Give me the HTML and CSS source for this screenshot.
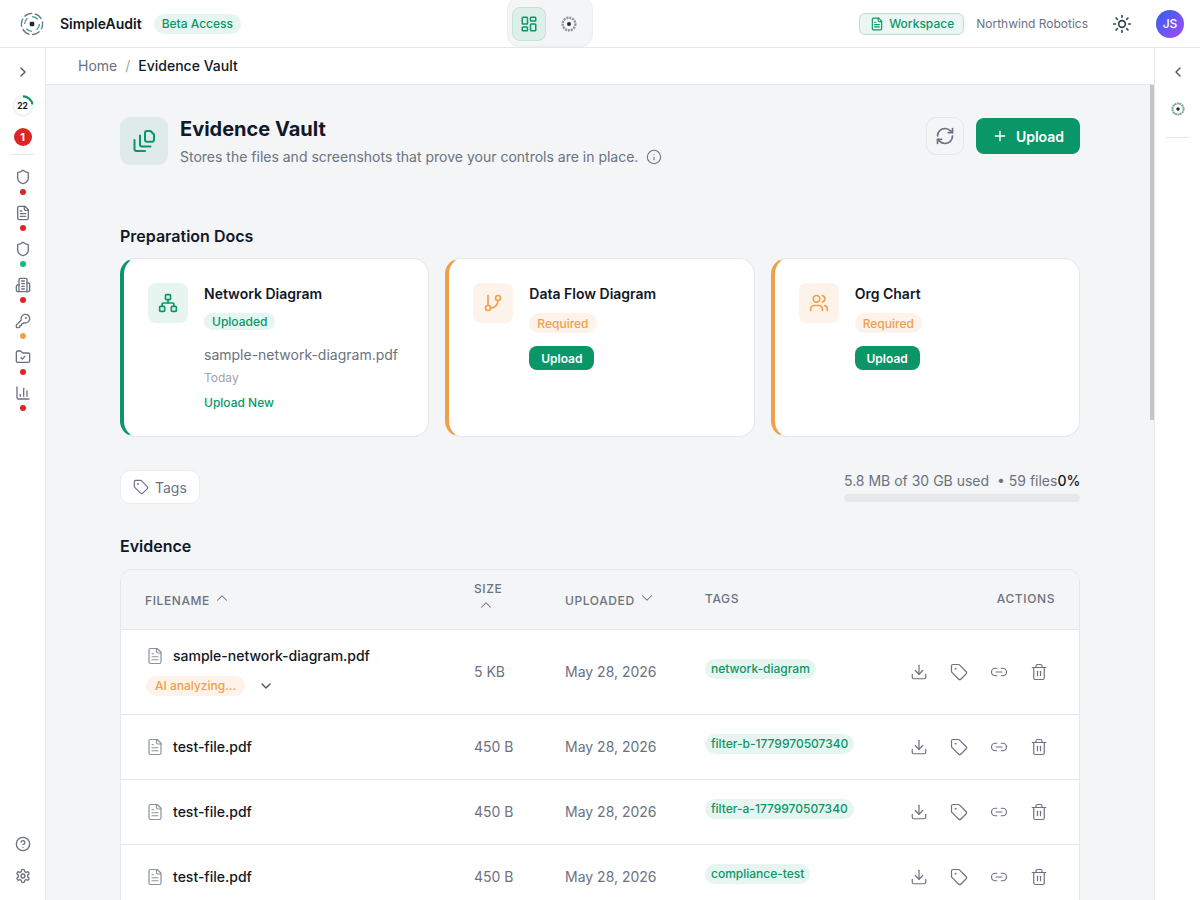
FILE: index.html
```html
<!DOCTYPE html>
<html lang="en">
<head>
<meta charset="utf-8">
<title>Evidence Vault</title>
<link rel="stylesheet" href="styles.css">
</head>
<body>
<svg class="defs" aria-hidden="true">
  <symbol id="i-right" viewBox="0 0 24 24"><path d="m9 18 6-6-6-6"/></symbol>
  <symbol id="i-left" viewBox="0 0 24 24"><path d="m15 18-6-6 6-6"/></symbol>
  <symbol id="i-up" viewBox="0 0 24 24"><path d="m18 15-6-6-6 6"/></symbol>
  <symbol id="i-down" viewBox="0 0 24 24"><path d="m6 9 6 6 6-6"/></symbol>
  <symbol id="i-shield" viewBox="0 0 24 24"><path d="M20 13c0 5-3.5 7.5-7.66 8.95a1 1 0 0 1-.67-.01C7.5 20.5 4 18 4 13V6a1 1 0 0 1 1-1c2 0 4.5-1.2 6.24-2.72a1.17 1.17 0 0 1 1.52 0C14.51 3.81 17 5 19 5a1 1 0 0 1 1 1z"/></symbol>
  <symbol id="i-file" viewBox="0 0 24 24"><path d="M15 2H6a2 2 0 0 0-2 2v16a2 2 0 0 0 2 2h12a2 2 0 0 0 2-2V7Z"/><path d="M14 2v4a2 2 0 0 0 2 2h4"/><path d="M10 9H8"/><path d="M16 13H8"/><path d="M16 17H8"/></symbol>
  <symbol id="i-building" viewBox="0 0 24 24"><path d="M6 22V4a2 2 0 0 1 2-2h8a2 2 0 0 1 2 2v18Z"/><path d="M6 12H4a2 2 0 0 0-2 2v6a2 2 0 0 0 2 2h2"/><path d="M18 9h2a2 2 0 0 1 2 2v9a2 2 0 0 1-2 2h-2"/><path d="M10 6h4"/><path d="M10 10h4"/><path d="M10 14h4"/><path d="M10 18h4"/></symbol>
  <symbol id="i-key" viewBox="0 0 24 24"><path d="M2.586 17.414A2 2 0 0 0 2 18.828V21a1 1 0 0 0 1 1h3a1 1 0 0 0 1-1v-1a1 1 0 0 1 1-1h1a1 1 0 0 0 1-1v-1a1 1 0 0 1 1-1h.172a2 2 0 0 0 1.414-.586l.814-.814a6.5 6.5 0 1 0-4-4z"/><circle cx="16.5" cy="7.5" r=".5"/></symbol>
  <symbol id="i-folder" viewBox="0 0 24 24"><path d="M20 20a2 2 0 0 0 2-2V8a2 2 0 0 0-2-2h-7.9a2 2 0 0 1-1.69-.9L9.6 3.9A2 2 0 0 0 7.93 3H4a2 2 0 0 0-2 2v13a2 2 0 0 0 2 2Z"/><path d="m9 13 2 2 4-4"/></symbol>
  <symbol id="i-chart" viewBox="0 0 24 24"><path d="M3 3v16a2 2 0 0 0 2 2h16"/><path d="M18 17V9"/><path d="M13 17V5"/><path d="M8 17v-3"/></symbol>
  <symbol id="i-help" viewBox="0 0 24 24"><circle cx="12" cy="12" r="10"/><path d="M9.09 9a3 3 0 0 1 5.83 1c0 2-3 3-3 3"/><path d="M12 17h.01"/></symbol>
  <symbol id="i-gear" viewBox="0 0 24 24"><path d="M12.22 2h-.44a2 2 0 0 0-2 2v.18a2 2 0 0 1-1 1.73l-.43.25a2 2 0 0 1-2 0l-.15-.08a2 2 0 0 0-2.73.73l-.22.38a2 2 0 0 0 .73 2.73l.15.1a2 2 0 0 1 1 1.72v.51a2 2 0 0 1-1 1.74l-.15.09a2 2 0 0 0-.73 2.73l.22.38a2 2 0 0 0 2.73.73l.15-.08a2 2 0 0 1 2 0l.43.25a2 2 0 0 1 1 1.73V20a2 2 0 0 0 2 2h.44a2 2 0 0 0 2-2v-.18a2 2 0 0 1 1-1.73l.43-.25a2 2 0 0 1 2 0l.15.08a2 2 0 0 0 2.73-.73l.22-.39a2 2 0 0 0-.73-2.73l-.15-.08a2 2 0 0 1-1-1.74v-.5a2 2 0 0 1 1-1.74l.15-.09a2 2 0 0 0 .73-2.73l-.22-.38a2 2 0 0 0-2.73-.73l-.15.08a2 2 0 0 1-2 0l-.43-.25a2 2 0 0 1-1-1.73V4a2 2 0 0 0-2-2z"/><circle cx="12" cy="12" r="3"/></symbol>
  <symbol id="i-dash" viewBox="0 0 24 24"><rect x="3" y="3" width="7" height="9" rx="1"/><rect x="14" y="3" width="7" height="5" rx="1"/><rect x="14" y="12" width="7" height="9" rx="1"/><rect x="3" y="16" width="7" height="5" rx="1"/></symbol>
  <symbol id="i-sun" viewBox="0 0 24 24"><circle cx="12" cy="12" r="4"/><path d="M12 2v2"/><path d="M12 20v2"/><path d="m4.93 4.93 1.41 1.41"/><path d="m17.66 17.66 1.41 1.41"/><path d="M2 12h2"/><path d="M20 12h2"/><path d="m6.34 17.66-1.41 1.41"/><path d="m19.07 4.93-1.41 1.41"/></symbol>
  <symbol id="i-files" viewBox="0 0 24 24"><path d="M13 10.7V4a2 2 0 0 1 2-2h3.5L22 5.5v5.2a2 2 0 0 1-2 2h-5a2 2 0 0 1-2-2Z"/><path d="M8 6.5v9a2 2 0 0 0 2 2h8.5"/><path d="M2.5 11v9a2 2 0 0 0 2 2H13"/></symbol>
  <symbol id="i-refresh" viewBox="0 0 24 24"><path d="M3 12a9 9 0 0 1 9-9 9.75 9.75 0 0 1 6.74 2.74L21 8"/><path d="M21 3v5h-5"/><path d="M21 12a9 9 0 0 1-9 9 9.75 9.75 0 0 1-6.74-2.74L3 16"/><path d="M8 16H3v5"/></symbol>
  <symbol id="i-plus" viewBox="0 0 24 24"><path d="M5 12h14"/><path d="M12 5v14"/></symbol>
  <symbol id="i-network" viewBox="0 0 24 24"><rect x="16" y="16" width="6" height="6" rx="1"/><rect x="2" y="16" width="6" height="6" rx="1"/><rect x="9" y="2" width="6" height="6" rx="1"/><path d="M5 16v-3a1 1 0 0 1 1-1h12a1 1 0 0 1 1 1v3"/><path d="M12 12V8"/></symbol>
  <symbol id="i-branch" viewBox="0 0 24 24"><path d="M6 3v12"/><circle cx="18" cy="6" r="3"/><circle cx="6" cy="18" r="3"/><path d="M18 9a9 9 0 0 1-9 9"/></symbol>
  <symbol id="i-users" viewBox="0 0 24 24"><path d="M16 21v-2a4 4 0 0 0-4-4H6a4 4 0 0 0-4 4v2"/><circle cx="9" cy="7" r="4"/><path d="M22 21v-2a4 4 0 0 0-3-3.87"/><path d="M16 3.13a4 4 0 0 1 0 7.75"/></symbol>
  <symbol id="i-tag" viewBox="0 0 24 24"><path d="M12.586 2.586A2 2 0 0 0 11.172 2H4a2 2 0 0 0-2 2v7.172a2 2 0 0 0 .586 1.414l8.704 8.704a2.426 2.426 0 0 0 3.42 0l6.58-6.58a2.426 2.426 0 0 0 0-3.42z"/><circle cx="7.5" cy="7.5" r=".5"/></symbol>
  <symbol id="i-info" viewBox="0 0 24 24"><circle cx="12" cy="12" r="10"/><path d="M12 16v-4"/><path d="M12 8h.01"/></symbol>
  <symbol id="i-download" viewBox="0 0 24 24"><path d="M21 15v4a2 2 0 0 1-2 2H5a2 2 0 0 1-2-2v-4"/><path d="m7 10 5 5 5-5"/><path d="M12 15V3"/></symbol>
  <symbol id="i-link" viewBox="0 0 24 24"><path d="M9 17H7A5 5 0 0 1 7 7h2"/><path d="M15 7h2a5 5 0 1 1 0 10h-2"/><path d="M8 12h8"/></symbol>
  <symbol id="i-trash" viewBox="0 0 24 24"><path d="M3 6h18"/><path d="M19 6v14c0 1-1 2-2 2H7c-1 0-2-1-2-2V6"/><path d="M8 6V4c0-1 1-2 2-2h4c1 0 2 1 2 2v2"/><path d="M10 11v6"/><path d="M14 11v6"/></symbol>
  <symbol id="i-logo" viewBox="0 0 24 24"><circle class="logo-outer" cx="12" cy="12" r="10.6"/><circle class="logo-inner" cx="12" cy="12" r="7.4"/><rect class="logo-core" x="9.7" y="9.7" width="4.6" height="4.6" rx="1.2"/></symbol>
  <symbol id="i-logo-muted" viewBox="0 0 24 24"><circle class="logo-thick" cx="12" cy="12" r="9.5"/><circle class="logo-core" cx="12" cy="12" r="3"/></symbol>
  <symbol id="i-logo-mix" viewBox="0 0 24 24"><circle class="logo-mix-a" cx="12" cy="12" r="9.5"/><circle class="logo-mix-b" cx="12" cy="12" r="9.5"/><circle class="logo-core" cx="12" cy="12" r="3"/></symbol>
</svg>

<header class="topbar">
  <div class="brand">
    <svg class="brand-logo"><use href="#i-logo"/></svg>
    <span class="brand-name">SimpleAudit</span>
    <span class="pill pill-green">Beta Access</span>
  </div>
  <nav class="switcher">
    <button class="switch-btn switch-active"><svg class="ic ic-18"><use href="#i-dash"/></svg></button>
    <button class="switch-btn"><svg class="ic-16"><use href="#i-logo-muted"/></svg></button>
  </nav>
  <div class="top-right">
    <span class="workspace"><svg class="ic ic-14"><use href="#i-file"/></svg>Workspace</span>
    <span class="org">Northwind Robotics</span>
    <svg class="ic ic-20 sun"><use href="#i-sun"/></svg>
    <span class="avatar">JS</span>
  </div>
</header>

<div class="shell">
  <aside class="rail">
    <svg class="ic ic-16 rail-chevron"><use href="#i-right"/></svg>
    <div class="ring">
      <svg class="ring-svg" viewBox="0 0 24 24"><circle class="ring-track" cx="12" cy="12" r="10.5"/><circle class="ring-value" cx="12" cy="12" r="10.5"/></svg>
      <span class="ring-num">22</span>
    </div>
    <span class="count-badge">1</span>
    <div class="rail-rule"></div>
    <div class="rail-items">
      <div class="rail-item"><svg class="ic ic-16"><use href="#i-shield"/></svg><i class="dot dot-red"></i></div>
      <div class="rail-item"><svg class="ic ic-16"><use href="#i-file"/></svg><i class="dot dot-red"></i></div>
      <div class="rail-item"><svg class="ic ic-16"><use href="#i-shield"/></svg><i class="dot dot-green"></i></div>
      <div class="rail-item"><svg class="ic ic-16"><use href="#i-building"/></svg><i class="dot dot-red"></i></div>
      <div class="rail-item"><svg class="ic ic-16"><use href="#i-key"/></svg><i class="dot dot-orange"></i></div>
      <div class="rail-item"><svg class="ic ic-16"><use href="#i-folder"/></svg><i class="dot dot-red"></i></div>
      <div class="rail-item"><svg class="ic ic-16"><use href="#i-chart"/></svg><i class="dot dot-red"></i></div>
    </div>
    <div class="rail-bottom">
      <svg class="ic ic-16"><use href="#i-help"/></svg>
      <svg class="ic ic-16"><use href="#i-gear"/></svg>
    </div>
  </aside>

  <div class="main">
    <div class="crumbs"><span class="crumb-home">Home</span><span class="crumb-sep">/</span><span class="crumb-cur">Evidence Vault</span></div>
    <main class="scroll">
      <div class="content">
        <section class="page-head">
          <div class="head-icon"><svg class="ic ic-24 green"><use href="#i-files"/></svg></div>
          <div class="head-text">
            <h1>Evidence Vault</h1>
            <p>Stores the files and screenshots that prove your controls are in place.<svg class="ic ic-16 info"><use href="#i-info"/></svg></p>
          </div>
          <div class="head-actions">
            <button class="btn-refresh"><svg class="ic ic-20"><use href="#i-refresh"/></svg></button>
            <button class="btn-upload"><svg class="ic ic-16"><use href="#i-plus"/></svg>Upload</button>
          </div>
        </section>

        <h2 class="section-title prep-title">Preparation Docs</h2>
        <section class="cards">
          <article class="card card-green">
            <div class="card-icon icon-green"><svg class="ic ic-20"><use href="#i-network"/></svg></div>
            <div class="card-body">
              <h3>Network Diagram</h3>
              <span class="pill pill-green">Uploaded</span>
              <div class="card-file">sample-network-diagram.pdf</div>
              <div class="card-date">Today</div>
              <div class="card-link">Upload New</div>
            </div>
          </article>
          <article class="card card-orange">
            <div class="card-icon icon-orange"><svg class="ic ic-20"><use href="#i-branch"/></svg></div>
            <div class="card-body">
              <h3>Data Flow Diagram</h3>
              <span class="pill pill-orange">Required</span>
              <button class="btn-small">Upload</button>
            </div>
          </article>
          <article class="card card-orange">
            <div class="card-icon icon-orange"><svg class="ic ic-20"><use href="#i-users"/></svg></div>
            <div class="card-body">
              <h3>Org Chart</h3>
              <span class="pill pill-orange">Required</span>
              <button class="btn-small">Upload</button>
            </div>
          </article>
        </section>

        <section class="toolbar">
          <button class="btn-tags"><svg class="ic ic-16"><use href="#i-tag"/></svg>Tags</button>
          <div class="storage">
            <div class="storage-text"><span>5.8 MB of 30 GB used&nbsp; • 59 files</span><strong>0%</strong></div>
            <div class="storage-bar"></div>
          </div>
        </section>

        <h2 class="section-title">Evidence</h2>
        <section class="table">
          <div class="row row-head">
            <div class="th th-low">FILENAME<svg class="ic sort"><use href="#i-up"/></svg></div>
            <div class="th th-stack">SIZE<svg class="ic sort-stack"><use href="#i-up"/></svg></div>
            <div class="th th-low">UPLOADED<svg class="ic sort"><use href="#i-down"/></svg></div>
            <div class="th">TAGS</div>
            <div class="th th-right">ACTIONS</div>
          </div>
          <div class="row row-tall">
            <div class="name-stack">
              <div class="name"><svg class="ic ic-18 file-ic"><use href="#i-file"/></svg>sample-network-diagram.pdf</div>
              <div class="status"><span class="pill pill-orange">AI analyzing...</span><svg class="ic ic-16 dark"><use href="#i-down"/></svg></div>
            </div>
            <div class="cell">5 KB</div>
            <div class="cell">May 28, 2026</div>
            <div class="tags"><span class="pill pill-green">network-diagram</span></div>
            <div class="actions"><svg class="ic ic-18"><use href="#i-download"/></svg><svg class="ic ic-18"><use href="#i-tag"/></svg><svg class="ic ic-18"><use href="#i-link"/></svg><svg class="ic ic-18"><use href="#i-trash"/></svg></div>
          </div>
          <div class="row">
            <div class="name"><svg class="ic ic-18 file-ic"><use href="#i-file"/></svg>test-file.pdf</div>
            <div class="cell">450 B</div>
            <div class="cell">May 28, 2026</div>
            <div class="tags"><span class="pill pill-green">filter-b-1779970507340</span></div>
            <div class="actions"><svg class="ic ic-18"><use href="#i-download"/></svg><svg class="ic ic-18"><use href="#i-tag"/></svg><svg class="ic ic-18"><use href="#i-link"/></svg><svg class="ic ic-18"><use href="#i-trash"/></svg></div>
          </div>
          <div class="row">
            <div class="name"><svg class="ic ic-18 file-ic"><use href="#i-file"/></svg>test-file.pdf</div>
            <div class="cell">450 B</div>
            <div class="cell">May 28, 2026</div>
            <div class="tags"><span class="pill pill-green">filter-a-1779970507340</span></div>
            <div class="actions"><svg class="ic ic-18"><use href="#i-download"/></svg><svg class="ic ic-18"><use href="#i-tag"/></svg><svg class="ic ic-18"><use href="#i-link"/></svg><svg class="ic ic-18"><use href="#i-trash"/></svg></div>
          </div>
          <div class="row">
            <div class="name"><svg class="ic ic-18 file-ic"><use href="#i-file"/></svg>test-file.pdf</div>
            <div class="cell">450 B</div>
            <div class="cell">May 28, 2026</div>
            <div class="tags"><span class="pill pill-green">compliance-test</span></div>
            <div class="actions"><svg class="ic ic-18"><use href="#i-download"/></svg><svg class="ic ic-18"><use href="#i-tag"/></svg><svg class="ic ic-18"><use href="#i-link"/></svg><svg class="ic ic-18"><use href="#i-trash"/></svg></div>
          </div>
        </section>
      </div>
      <div class="scrollbar"><div class="scrollbar-thumb"></div></div>
    </main>
  </div>

  <aside class="side-panel">
    <svg class="ic ic-16 panel-chevron"><use href="#i-left"/></svg>
    <svg class="panel-logo"><use href="#i-logo-mix"/></svg>
    <div class="panel-rule"></div>
  </aside>
</div>
</body>
</html>
```

FILE: styles.css
```css
* { box-sizing: border-box; }
html, body { height: 100%; }
body {
  margin: 0;
  height: 900px;
  overflow: hidden;
  display: flex;
  flex-direction: column;
  background: #fff;
  color: #111827;
  font-family: Inter, "Liberation Sans", sans-serif;
  font-size: 14px;
}
button { font-family: inherit; cursor: pointer; }
h1, h2, h3, p { margin: 0; }
.defs { position: absolute; width: 0; height: 0; }

.ic { fill: none; stroke: #6b7280; stroke-width: 2; stroke-linecap: round; stroke-linejoin: round; flex: none; display: block; }
.ic-14 { width: 14px; height: 14px; }
.ic-16 { width: 16px; height: 16px; flex: none; display: block; }
.ic-18 { width: 18px; height: 18px; }
.ic-20 { width: 20px; height: 20px; }
.ic-24 { width: 24px; height: 24px; }
.green { stroke: #0b9668; }
.dark { stroke: #4b5563; }

.logo-outer { fill: none; stroke: #6b7280; stroke-width: 1.3; stroke-dasharray: 8.5 2.6; stroke-dashoffset: 3; }
.logo-inner { fill: none; stroke: #34a57f; stroke-width: 1.3; stroke-dasharray: 6.5 5.1; }
.logo-core { fill: #1f2937; stroke: none; }
.logo-thick { fill: none; stroke: #8b939c; stroke-width: 3.6; stroke-dasharray: 3 1.4; }
.logo-mix-a { fill: none; stroke: #8b9a99; stroke-width: 3.6; stroke-dasharray: 3 1.2; }
.logo-mix-b { fill: none; stroke: #63c0a3; stroke-width: 1.6; stroke-dasharray: 5 3.4; }

.pill {
  display: inline-flex;
  align-items: center;
  height: 20px;
  padding: 0 8px;
  border-radius: 10px;
  font-size: 12px;
  font-weight: 500;
  white-space: nowrap;
}
.pill-green { background: #e7f5f0; color: #0b9668; }
.pill-orange { background: #fdf3ea; color: #f0a04b; }

/* top bar */
.topbar {
  height: 48px;
  flex: none;
  display: flex;
  align-items: center;
  border-bottom: 1px solid #e5e7eb;
  padding-right: 16px;
}
.brand { width: 507px; flex: none; display: flex; align-items: center; padding-left: 20px; }
.brand-logo { width: 24px; height: 24px; }
.brand-name { margin-left: 16px; font-size: 14px; font-weight: 600; color: #111827; }
.brand .pill { margin-left: 12px; }
.switcher {
  align-self: flex-start;
  width: 86px;
  height: 50px;
  margin-top: -3px;
  display: flex;
  align-items: center;
  gap: 6px;
  padding: 4px 4px 0;
  background: #f3f5f6;
  border: 1px solid #eceeef;
  border-radius: 12px;
}
.switch-btn {
  width: 34px;
  height: 34px;
  padding: 0;
  display: flex;
  align-items: center;
  justify-content: center;
  background: none;
  border: 1px solid transparent;
  border-radius: 8px;
}
.switch-active { background: #dcefe9; border-color: #c4e2d8; }
.switch-active .ic { stroke: #0b9668; stroke-width: 2; }
.top-right { margin-left: auto; display: flex; align-items: center; }
.workspace {
  display: flex;
  align-items: center;
  gap: 5px;
  width: 105px;
  height: 22px;
  padding-left: 10px;
  background: #ecf7f3;
  border: 1px solid #b8e0d2;
  border-radius: 6px;
  color: #0b9668;
  font-size: 12px;
  font-weight: 500;
}
.workspace .ic { stroke: #0b9668; }
.org { margin-left: 12px; font-size: 12px; color: #6b7280; }
.sun { margin-left: 24px; stroke: #374151; }
.avatar {
  margin-left: 24px;
  width: 28px;
  height: 28px;
  border-radius: 50%;
  display: flex;
  align-items: center;
  justify-content: center;
  background: linear-gradient(135deg, #2f5ff0, #a44df2);
  color: #fff;
  font-size: 12px;
  font-weight: 500;
}

.shell { flex: 1; min-height: 0; display: flex; }

/* left rail */
.rail {
  width: 46px;
  flex: none;
  display: flex;
  flex-direction: column;
  align-items: center;
  border-right: 1px solid #e5e7eb;
  background: #fff;
  padding: 16px 0 16px;
}
.rail-chevron { stroke: #4b5563; }
.ring { position: relative; width: 22px; height: 22px; margin-top: 15px; }
.ring-svg { width: 22px; height: 22px; display: block; transform: rotate(-90deg); }
.ring-track { fill: none; stroke: #f1f2f4; stroke-width: 2.2; }
.ring-value { fill: none; stroke: #0b9668; stroke-width: 2.2; stroke-dasharray: 14.5 66; }
.ring-num { position: absolute; inset: 0; display: flex; align-items: center; justify-content: center; font-size: 8.5px; font-weight: 700; color: #111827; }
.count-badge {
  margin-top: 11px;
  width: 18px;
  height: 18px;
  border-radius: 50%;
  display: flex;
  align-items: center;
  justify-content: center;
  background: #dc2626;
  color: #fff;
  font-size: 11px;
  font-weight: 700;
}
.rail-rule { width: 23px; height: 1px; background: #e5e7eb; margin-top: 8px; }
.rail-items { display: flex; flex-direction: column; gap: 6px; margin-top: 14px; }
.rail-item { height: 30px; display: flex; flex-direction: column; align-items: center; }
.dot { width: 6px; height: 6px; border-radius: 50%; margin-top: 4px; display: block; flex: none; }
.dot-red { background: #dc2626; }
.dot-green { background: #10b981; }
.dot-orange { background: #f0a04b; }
.rail-bottom { margin-top: auto; display: flex; flex-direction: column; gap: 16px; }

/* main */
.main { flex: 1; min-width: 0; display: flex; flex-direction: column; }
.crumbs {
  height: 37px;
  flex: none;
  display: flex;
  align-items: center;
  padding: 0 0 2px 32px;
  border-bottom: 1px solid #e5e7eb;
  font-size: 14px;
}
.crumb-home { color: #6b7280; }
.crumb-sep { color: #9ca3af; margin: 0 8px; }
.crumb-cur { color: #111827; font-weight: 500; }
.scroll { flex: 1; min-height: 0; display: flex; overflow: hidden; background: #f3f5f7; }
.content { flex: 1; min-width: 0; overflow: hidden; padding: 32px 70px 0 74px; }
.scrollbar { width: 4px; flex: none; }
.scrollbar-thumb { height: 335px; background: #c4c5c6; }

.page-head { display: flex; align-items: flex-start; }
.head-icon {
  width: 48px;
  height: 48px;
  border-radius: 10px;
  background: #dfebe8;
  display: flex;
  align-items: center;
  justify-content: center;
}
.head-text { margin-left: 12px; }
.head-text h1 { font-size: 20px; line-height: 24px; font-weight: 700; color: #111827; }
.head-text p { margin-top: 5px; display: flex; align-items: center; font-size: 14px; line-height: 22px; color: #6b7280; }
.info { margin-left: 8px; stroke-width: 1.6; }
.head-actions { margin-left: auto; display: flex; align-items: center; gap: 12px; }
.btn-refresh {
  width: 38px;
  height: 38px;
  padding: 0;
  display: flex;
  align-items: center;
  justify-content: center;
  background: #f3f5f7;
  border: 1px solid #e5e7eb;
  border-radius: 10px;
}
.btn-upload {
  width: 104px;
  height: 36px;
  padding: 0;
  display: flex;
  align-items: center;
  justify-content: center;
  gap: 8px;
  background: #0b9668;
  border: none;
  border-radius: 8px;
  color: #fff;
  font-size: 14px;
  font-weight: 600;
}
.btn-upload .ic { stroke: #fff; }

.section-title { font-size: 16px; line-height: 24px; font-weight: 600; color: #111827; }
.prep-title { margin-top: 56px; }

.cards { display: grid; grid-template-columns: repeat(3, 1fr); gap: 16px; margin-top: 10px; }
.card {
  height: 179px;
  display: flex;
  gap: 16px;
  padding: 24px;
  background: #fff;
  border: 1px solid #e5e7eb;
  border-left-width: 4px;
  border-radius: 16px;
}
.card-green { border-left-color: #0b9668; }
.card-orange { border-left-color: #f0a04b; }
.card-icon {
  width: 40px;
  height: 40px;
  flex: none;
  border-radius: 8px;
  display: flex;
  align-items: center;
  justify-content: center;
}
.icon-green { background: #e7f5f0; }
.icon-green .ic { stroke: #0b9668; }
.icon-orange { background: #fdf3ea; }
.icon-orange .ic { stroke: #f0a04b; }
.card-body { display: flex; flex-direction: column; align-items: flex-start; min-width: 0; }
.card-body h3 { font-size: 14px; line-height: 22px; font-weight: 600; color: #111827; }
.card-body .pill { margin-top: 8px; }
.card-file { margin-top: 14px; font-size: 14px; line-height: 22px; color: #6b7280; }
.card-date { margin-top: 3px; font-size: 12px; line-height: 18px; color: #9ca3af; }
.card-link { margin-top: 7px; font-size: 12px; line-height: 18px; font-weight: 500; color: #0b9668; }
.btn-small {
  margin-top: 13px;
  width: 65px;
  height: 24px;
  padding: 0;
  background: #0b9668;
  border: none;
  border-radius: 8px;
  color: #fff;
  font-size: 12px;
  font-weight: 600;
}

.toolbar { display: flex; justify-content: space-between; margin-top: 33px; }
.btn-tags {
  width: 80px;
  height: 34px;
  padding: 0 0 0 12px;
  display: flex;
  align-items: center;
  gap: 6px;
  background: #fff;
  border: 1px solid #e9ebee;
  border-radius: 10px;
  color: #6b7280;
  font-size: 14px;
}
.btn-tags .ic { stroke-width: 1.7; }
.storage { width: 236px; padding-top: 2px; }
.storage-text { display: flex; justify-content: space-between; white-space: nowrap; font-size: 14px; line-height: 18px; color: #6b7280; }
.storage-text strong { font-weight: 500; color: #111827; }
.storage-bar { height: 8px; margin-top: 4px; border-radius: 4px; background: #e5e7eb; }

.toolbar + .section-title { margin-top: 30px; }

.table { margin-top: 11px; background: #fff; border: 1px solid #e5e7eb; border-radius: 12px 12px 0 0; }
.row {
  display: grid;
  grid-template-columns: 329px 91px 140px 198px 1fr;
  align-items: center;
  height: 65px;
  padding: 0 24px;
  border-top: 1px solid #e5e7eb;
}
.row-head {
  height: 59px;
  border-top: none;
  background: #f3f5f7;
  border-radius: 12px 12px 0 0;
}
.row-tall { height: 85px; }
.th { font-size: 12px; font-weight: 500; letter-spacing: 0.05em; color: #6b7280; line-height: 18px; padding-bottom: 2px; }
.th-low { display: flex; align-items: center; gap: 3px; padding: 3px 0 0; }
.sort { width: 18px; height: 18px; margin-top: -6px; stroke-width: 1.4; }
.th-stack { display: flex; flex-direction: column; align-items: flex-start; padding: 0; margin-top: -6px; }
.sort-stack { width: 18px; height: 18px; stroke-width: 1.4; margin: -2px 0 0 3px; }
.th-right { text-align: right; }
.name { display: flex; align-items: center; gap: 9px; font-size: 14px; font-weight: 500; color: #111827; padding: 0 0 1px 1px; }
.file-ic { stroke-width: 1.6; stroke: #8b929c; }
.name-stack { display: flex; flex-direction: column; gap: 10px; margin-top: -2px; }
.name-stack .name { padding-bottom: 0; }
.status { display: flex; align-items: center; gap: 13px; padding-left: 1px; margin-top: 1px; }
.status .pill { padding: 0 9px; }
.cell { font-size: 14px; color: #6b7280; padding-bottom: 1px; }
.tags { margin-top: -7px; }
.tags .pill { padding: 0 6px; }
.actions { display: flex; justify-content: flex-end; gap: 22px; padding-right: 7px; }
.actions .ic { stroke-width: 1.6; }

/* right panel */
.side-panel {
  width: 46px;
  flex: none;
  display: flex;
  flex-direction: column;
  align-items: center;
  border-left: 1px solid #e5e7eb;
  background: #fff;
  padding-top: 16px;
}
.panel-chevron { stroke: #4b5563; }
.panel-logo { width: 14px; height: 14px; margin-top: 22px; }
.panel-rule { width: 24px; height: 1px; background: #e5e7eb; margin-top: 21px; }
```
